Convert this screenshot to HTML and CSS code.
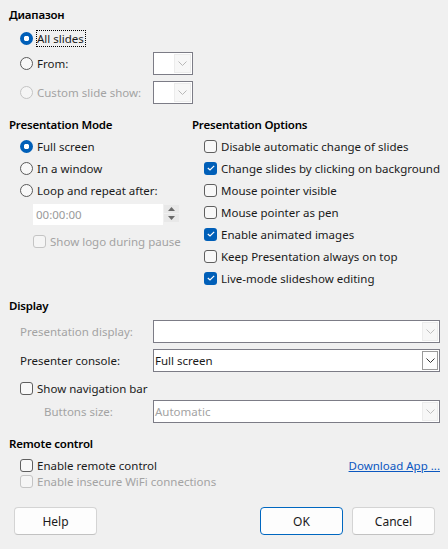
FILE: index.html
```html
<!DOCTYPE html>
<html lang="en">
<head>
  <meta charset="UTF-8">
  <title>Slide Show Settings</title>
  <link rel="stylesheet" href="styles.css">
</head>
<body>
  <div class="dialog">
    <div class="section-title">Диапазон</div>
    <div class="range">
      <div class="row">
        <span class="radio checked"></span>
        <span class="focus">All slides</span>
      </div>
      <div class="row spin-row">
        <span class="radio"></span>
        <span class="label-fixed">From:</span>
        <div class="spinbox">
          <span class="spin-field"></span>
          <span class="spin-btn"><svg width="9" height="5" viewBox="0 0 9 5"><polyline points="0.5,0.5 4.5,4.5 8.5,0.5" fill="none" stroke="#b8b8b8" stroke-width="1"/></svg></span>
        </div>
      </div>
      <div class="row spin-row gap-top disabled">
        <span class="radio"></span>
        <span class="label-fixed">Custom slide show:</span>
        <div class="spinbox">
          <span class="spin-field"></span>
          <span class="spin-btn"><svg width="9" height="5" viewBox="0 0 9 5"><polyline points="0.5,0.5 4.5,4.5 8.5,0.5" fill="none" stroke="#b8b8b8" stroke-width="1"/></svg></span>
        </div>
      </div>
    </div>

    <div class="columns">
      <div class="col-mode">
        <div class="section-title">Presentation Mode</div>
        <div class="list">
          <div class="row"><span class="radio checked"></span>Full screen</div>
          <div class="row"><span class="radio"></span>In a window</div>
          <div class="row"><span class="radio"></span>Loop and repeat after:</div>
        </div>
        <div class="time-row">
          <div class="time-field">00:00:00</div>
          <div class="time-spin">
            <span class="arrow-btn"><svg width="7" height="4" viewBox="0 0 7 4"><polygon points="0,4 3.5,0 7,4" fill="#6a6a6a"/></svg></span>
            <span class="arrow-btn"><svg width="7" height="4" viewBox="0 0 7 4"><polygon points="0,0 3.5,4 7,0" fill="#6a6a6a"/></svg></span>
          </div>
        </div>
        <div class="row logo-row disabled"><span class="check"></span>Show logo during pause</div>
      </div>

      <div class="col-options">
        <div class="section-title">Presentation Options</div>
        <div class="list">
          <div class="row"><span class="check"></span>Disable automatic change of slides</div>
          <div class="row"><span class="check checked"><svg width="8" height="6" viewBox="0 0 8 6"><polyline points="0.8,3 3,5 7.2,0.8" fill="none" stroke="#fff" stroke-width="1.2"/></svg></span>Change slides by clicking on background</div>
          <div class="row"><span class="check"></span>Mouse pointer visible</div>
          <div class="row"><span class="check"></span>Mouse pointer as pen</div>
          <div class="row"><span class="check checked"><svg width="8" height="6" viewBox="0 0 8 6"><polyline points="0.8,3 3,5 7.2,0.8" fill="none" stroke="#fff" stroke-width="1.2"/></svg></span>Enable animated images</div>
          <div class="row"><span class="check"></span>Keep Presentation always on top</div>
          <div class="row"><span class="check checked"><svg width="8" height="6" viewBox="0 0 8 6"><polyline points="0.8,3 3,5 7.2,0.8" fill="none" stroke="#fff" stroke-width="1.2"/></svg></span>Live-mode slideshow editing</div>
        </div>
      </div>
    </div>

    <div class="section-title display-title">Display</div>
    <div class="combo-row disabled">
      <span class="combo-label">Presentation display:</span>
      <div class="combo">
        <span class="combo-text"></span>
        <span class="combo-btn"><svg width="9" height="5" viewBox="0 0 9 5"><polyline points="0.5,0.5 4.5,4.5 8.5,0.5" fill="none" stroke="#c0c0c0" stroke-width="1"/></svg></span>
      </div>
    </div>
    <div class="combo-row second">
      <span class="combo-label">Presenter console:</span>
      <div class="combo active">
        <span class="combo-text">Full screen</span>
        <span class="combo-btn"><svg width="9" height="5" viewBox="0 0 9 5"><polyline points="0.5,0.5 4.5,4.5 8.5,0.5" fill="none" stroke="#333" stroke-width="1"/></svg></span>
      </div>
    </div>
    <div class="row nav-row"><span class="check"></span>Show navigation bar</div>
    <div class="combo-row third disabled">
      <span class="combo-label indent">Buttons size:</span>
      <div class="combo">
        <span class="combo-text">Automatic</span>
        <span class="combo-btn"><svg width="9" height="5" viewBox="0 0 9 5"><polyline points="0.5,0.5 4.5,4.5 8.5,0.5" fill="none" stroke="#c0c0c0" stroke-width="1"/></svg></span>
      </div>
    </div>

    <div class="section-title remote-title">Remote control</div>
    <div class="remote">
      <div class="row short"><span class="check"></span>Enable remote control<a class="link" href="#">Download App ...</a></div>
      <div class="row short disabled"><span class="check"></span>Enable insecure WiFi connections</div>
    </div>

    <div class="buttons">
      <button class="button">Help</button>
      <span class="spacer"></span>
      <button class="button default">OK</button>
      <button class="button">Cancel</button>
    </div>
  </div>
</body>
</html>
```

FILE: styles.css
```css
* {
  margin: 0;
  padding: 0;
  box-sizing: border-box;
}

body {
  font-family: "Noto Sans", "Open Sans", sans-serif;
  font-size: 11.5px;
  color: #1a1a1a;
  background: #f0f0f0;
  width: 448px;
  height: 549px;
  overflow: hidden;
}

.dialog {
  padding: 7px 8px 0 9px;
}

.section-title {
  font-weight: 600;
  font-size: 11.5px;
  letter-spacing: -0.2px;
  height: 16px;
  line-height: 16px;
  color: #000;
}

.row {
  display: flex;
  align-items: center;
  height: 22px;
  white-space: nowrap;
}

.disabled {
  color: #a3a3a3;
}

/* radios and checkboxes */
.radio {
  width: 13px;
  height: 13px;
  border-radius: 50%;
  border: 1px solid #5a5a5a;
  background: #f8f8f8;
  margin-right: 4px;
  flex: none;
}

.radio.checked {
  border: none;
  background: radial-gradient(circle, #fff 0 2.6px, #005fb8 3px);
}

.disabled .radio,
.disabled .check {
  border-color: #c4c4c4;
  background: #f5f5f5;
}

.check {
  width: 13px;
  height: 13px;
  border: 1px solid #5f5f5f;
  border-radius: 3px;
  background: #f8f8f8;
  margin-right: 4px;
  flex: none;
  display: flex;
  align-items: center;
  justify-content: center;
}

.check.checked {
  border: none;
  background: #005fb8;
}

.focus {
  outline: 1px dotted #000;
  line-height: 15px;
  padding: 0 1px 0 0;
}

/* range section */
.range {
  padding-left: 11px;
  margin-top: 4px;
}

.spin-row {
  height: 23px;
  margin-top: 3px;
}

.spin-row.gap-top {
  margin-top: 6px;
}

.label-fixed {
  width: 116px;
}

.spinbox {
  width: 40px;
  height: 23px;
  border: 1px solid #7c7c86;
  background: #fff;
  display: flex;
}

.spin-field {
  flex: 1;
}

.spin-btn {
  width: 17px;
  margin: 1px;
  background: #f7f7f7;
  border: 1px solid #ececec;
  display: flex;
  align-items: center;
  justify-content: center;
}

/* two columns */
.columns {
  display: grid;
  grid-template-columns: 183px 1fr;
  margin-top: 13px;
}

.list {
  margin-top: 2px;
  padding-left: 11px;
}

.col-options .list {
  padding-left: 12px;
}

.time-row {
  display: flex;
  margin: 3px 0 0 24px;
  height: 21px;
}

.time-field {
  width: 130px;
  background: #fff;
  color: #9a9a9a;
  padding-left: 3px;
  line-height: 21px;
}

.time-spin {
  display: flex;
  flex-direction: column;
  gap: 1px;
  margin-left: 1px;
  padding-top: 1px;
}

.arrow-btn {
  width: 15px;
  height: 8px;
  background: #e8e8e8;
  display: flex;
  align-items: center;
  justify-content: center;
}

.logo-row {
  margin: 5px 0 0 24px;
}

/* display section */
.display-title {
  margin-top: 9px;
}

.combo-row {
  display: flex;
  align-items: center;
  margin-top: 6px;
  padding-left: 11px;
}

.combo-row.second {
  margin-top: 6px;
}

.combo-row.third {
  margin-top: 1px;
}

.combo-label {
  width: 133px;
  white-space: nowrap;
}

.combo-label.indent {
  padding-left: 24px;
}

.combo {
  width: 287px;
  height: 23px;
  border: 1px solid #7c7c86;
  background: #fff;
  display: flex;
}

.combo-text {
  flex: 1;
  line-height: 21px;
  padding-left: 1px;
}

.combo-btn {
  width: 16px;
  margin: 1px;
  background: #f7f7f7;
  border: 1px solid #ececec;
  display: flex;
  align-items: center;
  justify-content: center;
}

.combo.active .combo-btn {
  background: #fdfdfd;
  border-color: #9a9a9a;
}

.nav-row {
  margin-top: 5px;
  padding-left: 11px;
}

/* remote section */
.remote-title {
  margin-top: 13px;
}

.remote {
  padding-left: 11px;
  margin-top: 5px;
}

.row.short {
  height: 16px;
}

.link {
  margin-left: auto;
  color: #0b57c0;
}

/* bottom buttons */
.buttons {
  display: flex;
  gap: 9px;
  margin-top: 18px;
  padding: 0 5px 0 5px;
}

.spacer {
  flex: 1;
}

.button {
  width: 83px;
  height: 28px;
  font-family: inherit;
  font-size: 12px;
  color: #1a1a1a;
  background: #fdfdfd;
  border: 1px solid #d4d4d4;
  border-bottom-color: #c2c2c2;
  border-radius: 4px;
}

.button.default {
  border-color: #0067c0;
}
```
